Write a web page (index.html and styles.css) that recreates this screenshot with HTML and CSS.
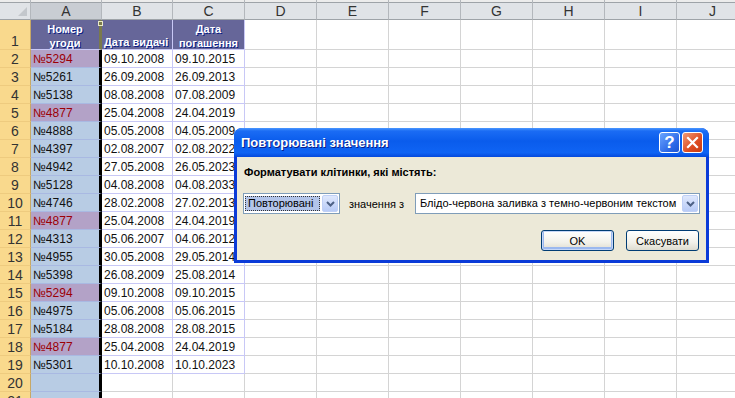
FILE: index.html
```html
<!DOCTYPE html>
<html lang="uk">
<head>
  <meta charset="UTF-8">
  <title>Повторювані значення</title>
  <link rel="stylesheet" href="styles.css">
</head>
<body>
  <div class="sheet">
    <div class="grid" id="grid">
      <div class="corner"></div>
      <div class="col-head sel">A</div>
      <div class="col-head">B</div>
      <div class="col-head">C</div>
      <div class="col-head">D</div>
      <div class="col-head">E</div>
      <div class="col-head">F</div>
      <div class="col-head">G</div>
      <div class="col-head">H</div>
      <div class="col-head">I</div>
      <div class="col-head">J</div>

      <div class="row-head tall">1</div>
      <div class="cell col-a title">Номер<br>угоди</div>
      <div class="cell title left">Дата видачі</div>
      <div class="cell title">Дата<br>погашення</div>
      <div class="cell"></div>
      <div class="cell"></div>
      <div class="cell"></div>
      <div class="cell"></div>
      <div class="cell"></div>
      <div class="cell"></div>
      <div class="cell"></div>
    </div>

    <div class="active-mark"></div>

    <!-- Dialog -->
    <div class="dialog">
      <div class="titlebar">
        <span class="title">Повторювані значення</span>
        <span class="tb-btn help">?</span>
        <span class="tb-btn close">
          <svg width="13" height="13" viewBox="0 0 13 13"><path d="M2 2 L11 11 M11 2 L2 11" stroke="#fff" stroke-width="2.2" stroke-linecap="square"/></svg>
        </span>
      </div>
      <div class="dlg-body">
        <p class="dlg-label">Форматувати клітинки, які містять:</p>
        <div class="dlg-row">
          <div class="combo short">
            <span class="combo-val focus">Повторювані</span>
            <span class="drop"><svg width="9" height="6" viewBox="0 0 9 6"><path d="M1 1 L4.5 4.5 L8 1" fill="none" stroke="#4d6185" stroke-width="2"/></svg></span>
          </div>
          <span class="mid">значення з</span>
          <div class="combo long">
            <span class="combo-val">Блідо-червона заливка з темно-червоним текстом</span>
            <span class="drop"><svg width="9" height="6" viewBox="0 0 9 6"><path d="M1 1 L4.5 4.5 L8 1" fill="none" stroke="#4d6185" stroke-width="2"/></svg></span>
          </div>
        </div>
        <div class="dlg-buttons">
          <button class="btn default">OK</button>
          <button class="btn">Скасувати</button>
        </div>
      </div>
    </div>
  </div>

  <script>
    // rows 2..19: number, issue date, due date, duplicate?
    const rows = [
      ['№5294', '09.10.2008', '09.10.2015', true],
      ['№5261', '26.09.2008', '26.09.2013'],
      ['№5138', '08.08.2008', '07.08.2009'],
      ['№4877', '25.04.2008', '24.04.2019', true],
      ['№4888', '05.05.2008', '04.05.2009'],
      ['№4397', '02.08.2007', '02.08.2022'],
      ['№4942', '27.05.2008', '26.05.2023'],
      ['№5128', '04.08.2008', '04.08.2033'],
      ['№4746', '28.02.2008', '27.02.2013'],
      ['№4877', '25.04.2008', '24.04.2019', true],
      ['№4313', '05.06.2007', '04.06.2012'],
      ['№4955', '30.05.2008', '29.05.2014'],
      ['№5398', '26.08.2009', '25.08.2014'],
      ['№5294', '09.10.2008', '09.10.2015', true],
      ['№4975', '05.06.2008', '05.06.2015'],
      ['№5184', '28.08.2008', '28.08.2015'],
      ['№4877', '25.04.2008', '24.04.2019', true],
      ['№5301', '10.10.2008', '10.10.2023']
    ];

    const grid = document.getElementById('grid');
    let html = '';
    for (let r = 2; r <= 21; r++) {
      const row = rows[r - 2];
      html += `<div class="row-head">${r}</div>`;
      if (row) {
        html += `<div class="cell col-a${row[3] ? ' dup' : ''}">${row[0]}</div>`;
        html += `<div class="cell data">${row[1]}</div>`;
        html += `<div class="cell data">${row[2]}</div>`;
      } else {
        html += '<div class="cell col-a"></div><div class="cell"></div><div class="cell"></div>';
      }
      for (let c = 0; c < 7; c++) html += '<div class="cell"></div>';
    }
    grid.insertAdjacentHTML('beforeend', html);
  </script>
</body>
</html>
```

FILE: styles.css
```css
body {
  margin: 0;
  background-color: #fff;
  font-family: "Liberation Sans", Arial, sans-serif;
  overflow: hidden;
}

.sheet {
  position: relative;
  width: 735px;
  height: 398px;
  overflow: hidden;
}

.grid {
  display: grid;
  grid-template-columns: 31px 71px 71px 72px repeat(7, 72px);
  grid-template-rows: 20px 30px repeat(20, 18px);
  width: 748px;
}

.grid > div {
  box-sizing: border-box;
  border-right: 1px solid #d4d4d4;
  border-bottom: 1px solid #d4d4d4;
  white-space: nowrap;
  overflow: hidden;
}

/* headers */
.corner, .col-head {
  background: linear-gradient(#ececec 0 2px, #9ea3a8 2px 3px, #e0e3e7 3px);
  border-right-color: #b3b7bc !important;
  border-bottom-color: #9ea3a8 !important;
}

.corner {
  position: relative;
}

.corner::after {
  content: "";
  position: absolute;
  right: 3px;
  bottom: 3px;
  border-left: 9px solid transparent;
  border-bottom: 9px solid #c3c7cc;
}

.col-head {
  font-size: 14px;
  color: #333;
  text-align: center;
  line-height: 21px;
  padding-top: 1px;
}

.col-head.sel {
  background: linear-gradient(#ececec 0 2px, #9ea3a8 2px 3px, #c9cdd3 3px);
}

.row-head {
  background-color: #f9d98d;
  border-right-color: #c7a866 !important;
  border-bottom-color: #eecb7f !important;
  font-size: 14px;
  color: #333;
  text-align: center;
  line-height: 18px;
}

.row-head.tall {
  line-height: 16px;
  padding-top: 13px;
}

/* cells */
.cell {
  font-size: 12px;
  color: #111;
  padding-left: 2px;
  line-height: 18px;
}

.cell.col-a {
  background-color: #b8cce4;
  border-right: 3px solid #000 !important;
  border-bottom-color: #a9b9e2 !important;
}

.cell.col-a.dup {
  background-color: #b3a2c7;
  color: #9c0006;
}

.cell.data {
  border-color: #c8c8f6 !important;
}

.cell.title {
  background-color: #666699;
  color: #fff;
  font-size: 11px;
  font-weight: bold;
  text-align: center;
  line-height: 14px;
  padding: 2px 0 0;
  border-color: #c8c8f6 !important;
}

.cell.title.left {
  text-align: left;
  padding: 15px 0 0 2px;
}

.cell.col-a.title {
  background-color: #666699;
  border-right: 3px solid #7a7a4c !important;
  border-bottom-color: #c8c8f6 !important;
}

.active-mark {
  position: absolute;
  left: 98px;
  top: 21px;
  width: 5px;
  height: 5px;
  background-color: #7a7a4c;
  border: 1px solid #e8e8c8;
  box-sizing: border-box;
}

/* Dialog */
.dialog {
  position: absolute;
  left: 234px;
  top: 128px;
  width: 475px;
  background-color: #0b3bd8;
  border-radius: 8px 8px 0 0;
  overflow: hidden;
  font-family: "Liberation Sans", Arial, sans-serif;
}

.titlebar {
  height: 29px;
  display: flex;
  align-items: center;
  gap: 2px;
  padding: 0 6px 0 7px;
  background: linear-gradient(#4a97ff 0, #1b6cf4 3px, #0a5cec 45%, #0f64f4 85%, #0449dc 100%);
}

.title {
  flex: 1;
  color: #fff;
  font-size: 13px;
  font-weight: bold;
  text-shadow: 1px 1px 0 #0a1e88;
}

.tb-btn {
  width: 21px;
  height: 21px;
  box-sizing: border-box;
  border: 1px solid #fff;
  border-radius: 3px;
  display: flex;
  align-items: center;
  justify-content: center;
  color: #fff;
}

.tb-btn.help {
  background: linear-gradient(135deg, #6aa5ff, #2a66e6 70%, #1f55d0);
  font-size: 17px;
  font-weight: bold;
}

.tb-btn.close {
  background: linear-gradient(135deg, #f09a78, #dd4b20 60%, #c63c14);
}

.dlg-body {
  background-color: #ece9d8;
  margin: 0 3px 3px;
  padding: 9px 6px 9px;
  font-size: 11px;
  color: #000;
}

.dlg-label {
  margin: 0 0 14px 1px;
  font-weight: bold;
  line-height: 13px;
}

.dlg-row {
  display: flex;
  align-items: center;
  height: 21px;
}

.combo {
  height: 21px;
  box-sizing: border-box;
  border: 1px solid #7f9db9;
  background-color: #fff;
  display: flex;
  align-items: center;
  padding: 1px;
}

.combo.short {
  width: 97px;
}

.combo.long {
  width: 285px;
  margin-left: auto;
}

.combo-val {
  flex: 1;
  padding-left: 3px;
  line-height: 15px;
  white-space: nowrap;
  overflow: hidden;
}

.combo-val.focus {
  background-color: #b3c5ea;
  outline: 1px dotted #333;
  outline-offset: -1px;
  margin-right: 2px;
}

.drop {
  width: 16px;
  height: 17px;
  box-sizing: border-box;
  border: 1px solid #bfd0f6;
  border-radius: 2px;
  background: linear-gradient(#dfe8fd, #b8cbf6);
  display: flex;
  align-items: center;
  justify-content: center;
}

.mid {
  margin-left: 9px;
}

.dlg-buttons {
  display: flex;
  justify-content: flex-end;
  gap: 12px;
  margin-top: 16px;
  padding-right: 1px;
}

.btn {
  width: 73px;
  height: 21px;
  font-family: "Liberation Sans", Arial, sans-serif;
  font-size: 11px;
  color: #000;
  border: 1px solid #003c74;
  border-radius: 3px;
  background: linear-gradient(#ffffff, #f2f1ea 60%, #dedcd0);
  padding: 0;
}

.btn.default {
  box-shadow: inset 0 0 0 1px #c6d7f7, inset 0 -1px 0 2px #9bb8ef;
}
```
